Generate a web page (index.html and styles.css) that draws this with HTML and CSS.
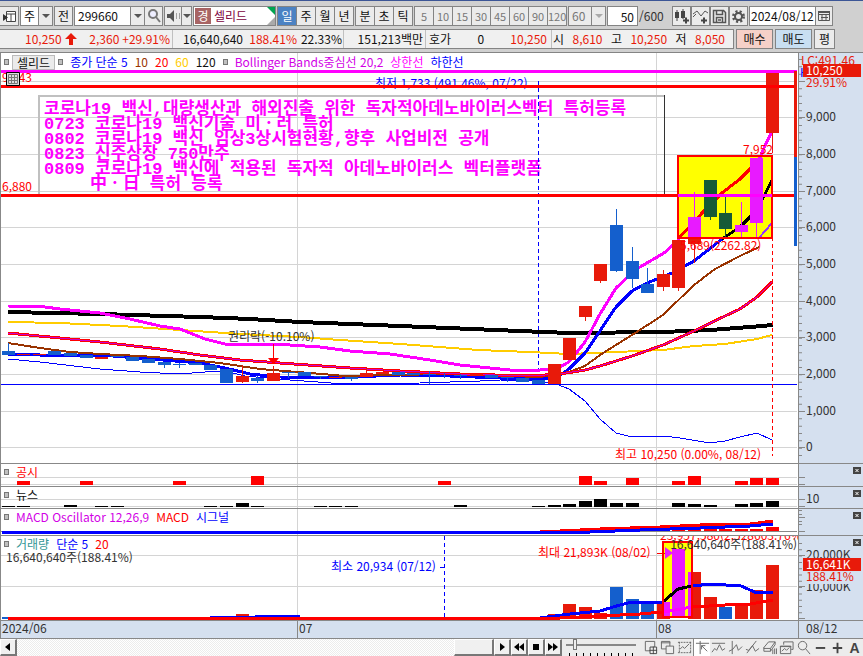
FILE: index.html
```html
<!DOCTYPE html>
<html lang="ko">
<head>
<meta charset="utf-8">
<title>셀리드 차트</title>
<link rel="stylesheet" href="styles.css">
</head>
<body>
<div class="app">
<header class="tools">
  <button class="btn icon" aria-label="목록"><svg width="15" height="15"><path d="M4.500 2.500h9v10h-9zM4 5h10M9 5v8" fill="#fff" stroke="#444"/><path d="M1 5l5 3.500-5 3.500z" fill="#333"/></svg></button>
  <label class="combo kind"><select aria-label="종류"><option>주</option></select><span class="arrow"></span></label>
  <button class="btn">전</button>
  <div class="combo code"><input aria-label="종목코드" value="299660"><button class="arrow" aria-label="최근 종목"></button><button class="find" aria-label="찾기"><svg width="16" height="16"><circle cx="7" cy="6" r="4" fill="#eef" stroke="#777" stroke-width="2"/><path d="M10 9l4 5" stroke="#777" stroke-width="2"/></svg></button></div>
  <div class="combo sound"><button aria-label="소리"><svg width="15" height="14"><path d="M1 5h3l4-4v12l-4-4h-3z" fill="#555"/><path d="M10 5h1M13 5h1M10 7h1M13 7h1M10 9h1M13 9h1" stroke="#555"/></svg></button><button class="arrow" aria-label="소리 메뉴"></button></div>
  <div class="stock"><b>경</b><span>셀리드</span><i></i></div>
  <div class="group"><button class="on">일</button><button>주</button><button>월</button><button>년</button></div>
  <div class="group"><button>분</button><button>초</button><button>틱</button></div>
  <div class="group dim"><button>5</button><button>10</button><button>15</button><button>30</button><button>45</button><button>60</button><button>90</button><button>120</button></div>
  <label class="combo mins"><select aria-label="분" disabled><option>60</option></select><span class="arrow"></span></label>
  <label class="count"><input aria-label="봉 개수" value="50"><span>/600</span></label>
  <div class="icons">
    <button class="btn" aria-label="지표 추가"><svg width="17" height="17"><path d="M2 4h4v6h-4zM8 3h4v7h-4z" fill="#444"/><path d="M4 2v11M10 1v10" stroke="#444"/><path d="M10 12.500h6M13 9.500v6" stroke="#444" stroke-width="2"/></svg></button>
    <button class="btn" aria-label="선 추가"><svg width="17" height="17"><path d="M1 6l4-3 4 5 4-5 3 2M1 9l3-3" fill="none" stroke="#555"/><path d="M9 12.500h6M12 9.500v6" stroke="#444" stroke-width="2"/></svg></button>
    <button class="btn" aria-label="저장"><svg width="17" height="17"><path d="M2.500 2.500h10l2 2v10h-12zM5.500 2.500v4h6v-4M5.500 14.500v-5h6v5M7 12h3" fill="none" stroke="#555" stroke-width="1.500"/></svg></button>
    <button class="btn" aria-label="설정"><svg width="17" height="17"><circle cx="8.500" cy="8.500" r="5" fill="none" stroke="#555" stroke-width="3" stroke-dasharray="2 2"/><circle cx="8.500" cy="8.500" r="3.500" fill="none" stroke="#555" stroke-width="2"/></svg></button>
  </div>
  <div class="combo date"><input aria-label="날짜" value="2024/08/12"><button aria-label="달력"><svg width="14" height="14"><path d="M1.500 2.500h11v9h-11zM1 5.500h12M4 8.500h7M5 5v6M9 5v6" fill="none" stroke="#555"/><path d="M1 3h12" stroke="#555" stroke-width="2"/></svg></button></div>
</header>
<section class="quote">
  <div class="strip">
    <div class="cell c1 up"><span>10,250</span><svg width="12" height="12"><path d="M6 0l6 6h-4v6h-4v-6h-4z" fill="#e81a0a"/></svg><span class="push">2,360</span><span>+29.91%</span></div>
    <div class="cell c2"><span>16,640,640</span><span class="up push">188.41%</span><span>22.33%</span></div>
    <div class="cell c3"><span>151,213백만</span></div>
    <div class="cell c4"><span>호가</span><span>0</span><span class="up">10,250</span></div>
    <div class="cell c5"><span>시</span><span class="up">8,610</span><span>고</span><span class="up">10,250</span><span>저</span><span class="up">8,050</span></div>
  </div>
  <button class="trade buy">매수</button><button class="trade sell">매도</button><button class="trade avg">평</button>
</section>
<main class="chart">
  <section class="panel">
    <div class="legend"><i></i><button>셀리드</button><i></i><span class="blue">종가 단순 5</span><span class="brown">10</span><span class="red">20</span><span class="gold">60</span><span>120</span><i></i><span class="violet">Bollinger Bands중심선 20,2</span><span class="pink">상한선</span><span class="blue">하한선</span></div>
    <svg class="plot" viewBox="0 53 798 410">
      <path class="grid" d="M1 81.500h796M1 117.500h796M1 154.500h796M1 191.500h796M1 227.500h796M1 264.500h796M1 301.500h796M1 337.500h796M1 374.500h796M1 411.500h796M1 447.500h796M297.500 53v410M656.500 53v410"/>
      <text class="red" x="2" y="82">9,843</text><text class="red" x="2" y="191">6,880</text>
      <text class="blue" x="375" y="88">최저 1,733 (491.46%, 07/22)</text>
      <path d="M38 96h626M39 96v98" stroke="#c0c0c0" stroke-width="2"/><path d="M664.500 95v100" stroke="#333"/>
      <g class="memo"><text x="44" y="114">코로나19 백신,대량생산과 해외진출 위한 독자적아데노바이러스벡터 특허등록</text><text x="44" y="129">0723 코로나19 백신기술 미ㆍ러 특허</text><text x="44" y="144">0802 코로나19 백신 임상3상시험현황,향후 사업비전 공개</text><text x="44" y="159">0823 신주상장 750만주</text><text x="44" y="174">0809 코로나19 백신에 적용된 독자적 아데노바이러스 벡터플랫폼</text><text x="90" y="189">中ㆍ日 특허 등록</text></g>
      <path d="M538.500 81v291" stroke="#00f" stroke-dasharray="4 3"/>
      <path d="M1 384.500h796" stroke="#00f"/>
      <g class="line">
        <polyline points="8,312 100,314 200,317 250,319 300,322 400,326 520,331 569,333 663,332 710,330 750,327 773,325" stroke="#000" stroke-width="4"/>
        <polyline points="8,322 60,323 120,326 180,330 240,334 300,337 340,340 400,344 478,350 530,352 569,354 616,352 663,350 694,346 725,344 757,339 772,335" stroke="#fc0" stroke-width="2"/>
        <polyline points="8,306 45,307 60,309 100,313 130,319 160,326 180,329 205,339 225,344 275,344 320,347 350,351 390,354 430,360 460,365 500,369 520,371 540,370 556,369 569,362 585,342 600,314 616,288 632,273 640,267 664,253 672,246 680,239" stroke="#f0f" stroke-width="3"/>
        <polyline points="8,354 40,355 100,355 150,359 200,363 225,368 250,374 280,377 330,378 400,375 450,376 500,378 554,379 569,369 585,353 600,331 616,307 632,291 647,283 657,279 672,273 694,261 722,239" stroke="#00f" stroke-width="3"/>
        <polyline points="8,343 40,348 70,352 100,354 140,356 180,359 220,363 260,369 310,373 345,376 390,375 450,374 540,377 569,372 585,366 600,355 632,335 663,315 694,285 715,269 740,256 759,247" stroke="#930" stroke-width="2"/>
        <polyline points="8,333 60,338 100,342 160,349 200,355 240,360 280,363 350,368 400,371 460,374 530,376 560,374 585,370 600,366 632,356 663,345 694,331 725,316 740,309 757,297 772,282" stroke="#f00" stroke-width="3"/>
        <polyline points="8,333 60,338 100,342 160,349 200,355 240,360 280,363 350,368 400,371 460,374 530,376 560,374 585,370 600,366 632,356 663,345 694,331 725,316 740,309 757,297 772,282" stroke="#c0c" stroke-width="1"/>
        <polyline points="8,359 40,362 100,369 140,372 180,374 205,372 225,371 245,376 290,380 345,384 420,383 480,381 500,380 540,381 556,384 569,389 585,401 600,419 616,433 632,437 663,436 680,438 710,443 725,441 740,437 757,433 772,440" stroke="#00f" stroke-width="1"/>
      </g>
      <path class="down" d="M2 351h13v4h-13zM8 343h1v10h-1zM48 351h13v4h-13zM64 353h13v3h-13zM80 355h13v3h-13zM111 356h13v1h-13zM126 357h13v4h-13zM142 359h13v4h-13zM158 362h13v3h-13zM164 362h1v6h-1zM173 364h13v1h-13zM179 363h1v5h-1zM189 363h13v2h-13zM204 365h13v5h-13zM220 369h13v14h-13zM251 378h13v3h-13zM257 376h1v7h-1zM282 372h13v1h-13zM288 372h1v6h-1zM298 372h13v4h-13zM314 376h13v1h-13zM320 376h1v3h-1zM345 377h13v2h-13zM351 377h1v4h-1zM392 372h13v3h-13zM407 373h13v2h-13zM429 371h1v13h-1zM423 374h13v1h-13zM444 373h1v5h-1zM454 375h13v1h-13zM460 374h1v5h-1zM485 375h13v3h-13zM501 377h13v1h-13zM507 377h1v5h-1zM516 378h13v4h-13zM532 380h13v4h-13zM610 225h13v46h-13zM616 209h1v63h-1zM626 261h13v18h-13zM632 247h1v41h-1zM641 284h13v9h-13zM647 268h1v25h-1z"/>
      <path class="upfill" d="M17 354h13v1h-13zM33 354h13v1h-13zM95 357h13v2h-13zM236 376h13v6h-13zM242 365h1v18h-1zM267 373h13v8h-13zM273 366h1v8h-1zM329 377h13v1h-13zM360 373h13v4h-13zM366 368h1v6h-1zM376 372h13v2h-13zM470 374h13v2h-13zM548 364h13v20h-13zM563 338h13v22h-13zM579 306h13v11h-13zM585 306h1v15h-1zM594 264h13v17h-13zM600 264h1v19h-1zM657 274h13v13h-13zM663 270h1v21h-1zM672 240h13v48h-13zM678 240h1v51h-1zM688 217h13v27h-13zM694 217h1v46h-1zM766 72h13v61h-13zM772 72h1v81h-1z"/>
      <path d="M678 156h94v82h-94z" fill="#ff0"/>
      <g class="line"><polyline points="680,237 703,212 722,193 740,179 752,167" stroke="#f00" stroke-width="3"/><polyline points="722,239 740,227 750,217 763,198 772,180" stroke="#000" stroke-width="3"/><polyline points="759,238 772,223" stroke="#93f" stroke-width="2"/><polyline points="756,167 763,150 772,131" stroke="#f0f" stroke-width="3"/></g>
      <path fill="#e81aff" d="M688 217h13v21h-13zM694 192h1v27h-1zM735 225h13v7h-13zM741 202h1v36h-1zM750 158h13v65h-13zM756 158h1v80h-1z"/>
      <path fill="#165a37" d="M704 180h13v37h-13zM710 180h1v40h-1zM719 213h13v16h-13zM725 196h1v41h-1z"/>
      <path class="upfill" d="M766 72h13v61h-13z"/>
      <path d="M678 156h94v82h-94z" fill="none" stroke="#f00" stroke-width="2"/>
      <path d="M1 86.500h796M1 195.500h796" stroke="#f00" stroke-width="3"/><path d="M1 71.500h796M678 195.500h94" stroke="#f0f" stroke-width="3"/>
      <path d="M772.500 160v296" stroke="#f00" stroke-dasharray="4 3"/>
      <path d="M795.500 71v86" stroke="#e81a0a" stroke-width="3"/><path d="M795.500 157v89" stroke="#145fcd" stroke-width="3"/>
      <text x="228" y="341">권리락(-10.10%)</text><path d="M273 344h1v14h5l-5 6h-1l-5-6h5z" fill="#f00"/>
      <text class="red" x="743" y="154">7,952</text><text class="red" x="680" y="250">5,689(2262.82)</text><text class="red" x="615" y="459">최고 10,250 (0.00%, 08/12)</text>
      <path d="M6.500 72.500h13v13h-13z" fill="#ddd" stroke="#000"/><path d="M8.500 74.500h9v9h-9zM8 77.500h10M8 80.500h10M11.500 74v10M14.500 74v10" fill="none" stroke="#777"/>
    </svg>
    <svg class="axis" viewBox="798 53 65 410">
      <path class="tick" d="M798.500 53v410M799 81.500h6M799 117.500h6M799 154.500h6M799 191.500h6M799 227.500h6M799 264.500h6M799 301.500h6M799 337.500h6M799 374.500h6M799 411.500h6M799 447.500h6"/>
      <path d="M800.500 59v400" stroke="#888" stroke-width="3" stroke-dasharray="1 6.333"/>
      <text class="upfill" x="801" y="65">LC:491.46</text><text class="blue" x="800" y="77">H</text><path class="upfill" d="M803 64h58v13h-58z"/><text class="white" x="806" y="75">10,250</text><text class="upfill" x="806" y="87">29.91%</text>
      <text x="806" y="121">9,000</text><text x="806" y="158">8,000</text><text x="806" y="195">7,000</text><text x="806" y="231">6,000</text><text x="806" y="268">5,000</text><text x="806" y="305">4,000</text><text x="806" y="341">3,000</text><text x="806" y="378">2,000</text><text x="806" y="415">1,000</text><text x="806" y="451">0</text>
    </svg>
  </section>
  <section class="panel">
    <div class="legend"><i></i><span class="red">공시</span></div>
    <svg class="plot" viewBox="0 463 798 23"><path class="grid" d="M1 477.500h796M1 484.500h796M297.500 463v23M656.500 463v23"/><path class="tick" d="M0 463.500h798"/><path fill="#f00" d="M17 481h13v4h-13zM80 481h13v4h-13zM173 481h13v4h-13zM251 476h13v9h-13zM438 481h13v4h-13zM579 476h13v9h-13zM594 481h13v4h-13zM626 478h13v7h-13zM672 481h13v4h-13zM688 476h13v9h-13zM735 481h13v4h-13zM750 478h13v7h-13zM766 478h13v7h-13z"/></svg>
    <svg class="axis" viewBox="798 463 65 23"><path class="tick" d="M798.500 463v23M798 463.500h65M799 477.500h6M799 484.500h6"/><path class="close" d="M853 467h8v7h-8z"/><path class="cross" d="M855.500 469l3 3M858.500 469l-3 3"/></svg>
  </section>
  <section class="panel">
    <div class="legend"><i></i><span>뉴스</span></div>
    <svg class="plot" viewBox="0 486 798 22"><path class="grid" d="M1 499.500h796M1 506.500h796M297.500 486v22M656.500 486v22"/><path class="tick" d="M0 486.500h798"/><path d="M2 506h13v1h-13zM17 506h13v1h-13zM64 505h13v2h-13zM95 506h13v1h-13zM111 506h13v1h-13zM204 506h13v1h-13zM220 506h13v1h-13zM236 503h13v4h-13zM251 506h13v1h-13zM314 506h13v1h-13zM329 506h13v1h-13zM345 506h13v1h-13zM454 505h13v2h-13zM532 506h13v1h-13zM548 505h13v2h-13zM563 504h13v3h-13zM579 501h13v6h-13zM594 499h13v8h-13zM610 503h13v4h-13zM626 503h13v4h-13zM672 503h13v4h-13zM688 504h13v3h-13zM704 505h13v2h-13zM735 504h13v3h-13zM750 503h13v4h-13zM766 501h13v6h-13z"/></svg>
    <svg class="axis" viewBox="798 486 65 22"><path class="tick" d="M798.500 486v22M798 486.500h65M799 499.500h6M799 506.500h6"/><text x="806" y="503">10</text><path class="close" d="M853 490h8v7h-8z"/><path class="cross" d="M855.500 492l3 3M858.500 492l-3 3"/></svg>
  </section>
  <section class="panel">
    <div class="legend"><i></i><span class="violet">MACD Oscillator 12,26,9</span><span class="red">MACD</span><span class="blue">시그널</span></div>
    <svg class="plot" viewBox="0 508 798 27"><path class="grid" d="M297.500 508v27M656.500 508v27"/><path class="tick" d="M0 508.500h798M1 531.500h796"/><path fill="#f00" d="M563 530h13v1h-13zM579 530h13v1h-13zM594 530h13v1h-13zM641 529h13v2h-13zM657 529h13v2h-13zM672 529h13v2h-13zM688 529h13v2h-13zM704 529h13v2h-13zM719 529h13v2h-13zM735 529h13v2h-13zM750 529h13v2h-13zM766 527h13v4h-13z"/><g class="line"><polyline points="8,532 540,532 600,529 660,527 700,525 750,524 773,521" stroke="#f00" stroke-width="3"/><polyline points="2,532 590,532 640,530 700,528 750,526 773,524" stroke="#00f" stroke-width="3"/></g></svg>
    <svg class="axis" viewBox="798 508 65 27"><path class="tick" d="M798.500 508v27M798 508.500h65M799 517.500h6M799 531.500h6M799 510.500h3M799 514.500h3M799 521.500h3M799 524.500h3"/><path class="close" d="M853 512h8v7h-8z"/><path class="cross" d="M855.500 514l3 3M858.500 514l-3 3"/></svg>
  </section>
  <section class="panel">
    <div class="legend"><i></i><span class="teal">거래량</span><span class="blue">단순 5</span><span class="red">20</span></div>
    <svg class="plot" viewBox="0 535 798 85">
      <path class="grid" d="M1 555.500h796M1 586.500h796M297.500 535v85M656.500 535v85"/>
      <text class="red" x="660" y="540">23,957,580(2,528603.76%)</text>
      <path class="upfill" d="M236 614h13v4h-13zM548 614h13v5h-13zM563 604h13v15h-13zM579 607h13v12h-13zM594 613h13v6h-13zM657 602h13v17h-13zM688 572h13v47h-13zM704 597h13v22h-13zM735 605h13v14h-13zM750 590h13v29h-13zM766 565h13v54h-13z"/>
      <path class="down" d="M2 617h13v2h-13zM610 587h13v32h-13zM626 599h13v20h-13zM641 604h13v15h-13zM719 607h13v12h-13z"/>
      <path d="M663 542h29v75h-29z" fill="#ff0"/><path fill="#e81aff" d="M664 602h6v15h-6zM672 549h13v68h-13zM688 572h4v45h-4z"/>
      <g class="line"><polyline points="210,617 300,616" stroke="#00f" stroke-width="2"/><polyline points="540,618 570,614 600,611 620,605 632,602 663,602" stroke="#00f" stroke-width="3"/><polyline points="664,601 678,589 692,586" stroke="#000" stroke-width="3"/><polyline points="693,586 710,584 741,586 757,593 773,592" stroke="#00f" stroke-width="3"/><polyline points="8,618 560,618 640,614 663,612" stroke="#f00" stroke-width="3"/><polyline points="664,612 692,607" stroke="#f0f" stroke-width="3"/><polyline points="693,607 725,605 750,604 773,600" stroke="#f00" stroke-width="3"/></g>
      <path d="M663 542h29v75h-29z" fill="none" stroke="#f00" stroke-width="2"/>
      <path d="M444.500 536v82M440 567.500h4" stroke="#00f" stroke-dasharray="4 3"/><path d="M657 553.500h8" stroke="#f00"/><path d="M665 547l8 6-8 6z" fill="#e81aff"/>
      <text x="6" y="562">16,640,640주(188.41%)</text><text x="797" y="549" text-anchor="end">16,640,640주(188.41%)</text><text class="blue" x="331" y="571">최소 20,934 (07/12)</text><text class="red" x="538" y="557">최대 21,893K (08/02)</text>
      <path class="tick" d="M0 535.500h798"/>
    </svg>
    <svg class="axis" viewBox="798 535 65 85"><text x="806" y="591">10,000K</text><path d="M806 576h56v8h-56z" fill="#d5e0ef"/><path class="tick" d="M798.500 535v85M798 535.500h65M799 555.500h6M799 586.500h6M799 618.500h6"/><path d="M800.500 543v76" stroke="#888" stroke-width="3" stroke-dasharray="1 5.300"/><text x="806" y="559">20,000K</text><path class="upfill" d="M803 558h58v13h-58z"/><text class="white" x="806" y="569">16,641K</text><text class="upfill" x="806" y="581">188.41%</text><path class="close" d="M853 539h8v7h-8z"/><path class="cross" d="M855.500 541l3 3M858.500 541l-3 3"/></svg>
  </section>
  <section class="panel dates">
    <svg class="plot" viewBox="0 620 798 18"><path class="tick" d="M0 620.500h798M297.500 620v18M656.500 620v18"/><text x="2" y="633">2024/06</text><text x="299" y="633">07</text><text x="658" y="633">08</text></svg>
    <svg class="axis" viewBox="798 620 65 18"><path class="tick" d="M798 620.500h65M798.500 620v18"/><text x="806" y="633">08/12</text></svg>
  </section>
</main>
<footer class="bottom">
  <button class="nav" aria-label="왼쪽"><svg width="10" height="10"><path d="M7 1v8l-5-4z"/></svg></button>
  <div class="track"><div class="thumb"></div></div>
  <button class="nav" aria-label="오른쪽"><svg width="10" height="10"><path d="M3 1v8l5-4z"/></svg></button>
  <button class="nav" aria-label="뒤로"><svg width="10" height="10"><path d="M5 1v8l-5-4zM10 1v8l-5-4z"/></svg></button>
  <button class="nav" aria-label="정지"><svg width="10" height="10"><path d="M2 2h6v6h-6z"/></svg></button>
  <button class="nav" aria-label="앞으로"><svg width="10" height="10"><path d="M0 1v8l5-4zM5 1v8l5-4z"/></svg></button>
  <div class="speed"><input type="range" aria-label="속도" min="0" max="10" value="1"></div>
  <div class="draw">
    <button aria-label="새 창"><svg viewBox="0 0 16 16"><path d="M2.500 1.500h10v10h-10z"/><path d="M7.500 7.500h7v7h-7zM11 7v8M7 11h8" fill="#eee" stroke="#444"/></svg></button>
    <button aria-label="겹치기"><svg viewBox="0 0 16 16"><path d="M1.500 1.500h9v8h-9zM1 3h10"/><path d="M6.500 6.500h8v8h-8z" fill="#eee"/></svg></button>
    <button aria-label="영역"><svg viewBox="0 0 16 16"><path d="M1 2.500h14M1 13.500h14M2.500 2v12M14.500 2v12" stroke-dasharray="2 1"/><path d="M3 10l3-3 2 2 5-5"/></svg></button>
    <button class="on" aria-label="십자선"><svg viewBox="0 0 16 16"><path d="M1 3.500h14M5.500 1v14M7 6l6 6M7 10v-4h4"/></svg></button>
    <button aria-label="추세선"><svg viewBox="0 0 16 16"><path d="M1 3.500h14M1 13l3-4 2 2 3-6 3 6 3-2"/></svg></button>
    <button aria-label="수직선"><svg viewBox="0 0 16 16"><path d="M4.500 1v14M1 12l4-2 4-5 2 6 4-4"/></svg></button>
    <button aria-label="각도선"><svg viewBox="0 0 16 16"><path d="M2 14l10-13M1 10l3 1 4-5 3 6 4-3"/></svg></button>
    <button aria-label="지우개"><svg viewBox="0 0 16 16"><path d="M2 8l5-6h7l-5 7h-7zM2 8v4h7v-3M9 12l5-7v-3M11.500 10v5M13.500 9v6M15.500 9v6"/></svg></button>
    <button aria-label="그림"><svg viewBox="0 0 16 16"><path d="M5 5v-3h10v8h-2M1.500 6.500h11v8h-11zM1 7h12M3 12l3-3 2 2 3-3"/></svg></button>
    <button aria-label="확대경"><svg viewBox="0 0 16 16"><circle cx="7" cy="6" r="4.500"/><path d="M10 9l5 6"/></svg></button>
    <button aria-label="축소"><svg viewBox="0 0 16 16"><path d="M3 8.500h10" stroke="#444" stroke-width="2"/></svg></button>
    <button aria-label="확대"><svg viewBox="0 0 16 16"><path d="M3 8.500h10M8 3v11" stroke="#444" stroke-width="2"/></svg></button>
    <button class="auto">A</button>
  </div>
</footer>
</div>
</body>
</html>
```
FILE: styles.css
```css
* { box-sizing: border-box; }
body { margin: 0; background: #d0d0d0; color: #111; font: 12px/16px "Noto Sans CJK KR", sans-serif; }
button, input, select { font: inherit; color: inherit; border: 0; margin: 0; padding: 0; background: none; border-radius: 0; }
input, select { min-width: 0; outline: 0; appearance: none; }
svg { display: block; flex: none; }
.app { border-top: 1px solid #3c5696; overflow: hidden; }

.tools { display: flex; height: 28px; padding-top: 5px; gap: 1px; }
.tools > * { height: 20px; flex: none; }
.btn { border: 1px solid #848484; background: #ebebeb; min-width: 19px; display: flex; align-items: center; justify-content: center; }
.icon { border-left: 0; width: 19px; }
.combo { display: flex; border: 1px solid #848484; background: #fff; }
.combo > * + * { border-left: 1px solid #848484; }
.combo button, .arrow { background: #ebebeb; display: flex; align-items: center; justify-content: center; }
.combo input, .combo select { flex: 1; padding-left: 3px; }
.combo .arrow { width: 14px; flex: none; }
.arrow::after { content: ""; border: 4px solid transparent; border-top-color: #555; border-bottom: 0; }
.kind { width: 33px; }
.code { width: 89px; }
.find { width: 18px; }
.sound { width: 28px; }
.sound > :first-child { flex: 1; overflow: hidden; }
.sound .arrow { width: 10px; }
.stock { display: flex; align-items: center; width: 83px; gap: 3px; padding-left: 1px; border: 1px solid #848484; background: #fff; color: #80003c; position: relative; }
.stock b { background: #a86464; color: #fff; font-weight: 400; width: 16px; height: 16px; text-align: center; }
.stock i { position: absolute; right: 0; top: 0; border: 4px solid; border-color: #00a550 #00a550 transparent transparent; }
.stock i::after { content: ""; position: absolute; right: -4px; top: 6px; border: 4px solid; border-color: transparent #aaa #aaa transparent; }
.group { display: flex; border: 1px solid #848484; border-left: 0; background: #ebebeb; }
.group button { width: 19px; border-left: 1px solid #848484; }
.group .on { background: #4b82c3; color: #fff; }
.dim, .mins { color: #777; }
.dim { font-size: 11px; }
.mins, .mins select { background: #ebebeb; opacity: 1; }
.mins { width: 38px; }
.mins .arrow::after { border-top-color: #aaa; }
.count { display: flex; width: 64px; align-items: center; gap: 1px; color: #333; }
.count input { width: 31px; height: 20px; border: 1px solid #848484; background: #fff; text-align: right; padding-right: 3px; color: #111; }
.icons { display: flex; }
.date { width: 84px; }
.date input { padding-left: 1px; }
.date button { width: 17px; }

.quote { display: flex; height: 23px; gap: 2px; }
.strip { flex: 0 0 734px; display: flex; height: 20px; border: 1px solid #848484; border-left: 0; background: #f0f0f0; }
.cell { display: flex; align-items: center; gap: 4px; padding: 0 3px 0 10px; }
.cell + .cell { border-left: 1px solid #c0c0c0; }
.cell span { white-space: nowrap; }
.up { color: #e81a0a; }
.push { margin-left: auto; }
.c1 { width: 172px; padding: 0 2px 0 25px; gap: 3px; }
.c2 { width: 171px; padding-right: 1px; }
.c3 { width: 82px; justify-content: flex-end; padding: 0 2px; }
.c4 { width: 126px; justify-content: space-between; padding: 0 4px 0 3px; }
.c5 { flex: 1; justify-content: space-between; padding: 0 8px 0 1px; gap: 0; }
.trade { width: 37px; height: 20px; border: 1px solid #848484; }
.buy { background: #f5d0c8; }
.sell { background: #c8dff2; }
.avg { width: 21px; background: #ebebeb; }

.chart { background: #fff; border-top: 1px solid #848484; }
.panel { display: grid; grid-template-columns: 798fr 65fr; position: relative; }
.plot, .axis { width: 100%; height: auto; min-width: 0; }
.plot { background: linear-gradient(#888, #888) 0 0 / 1px 100% no-repeat; }
.axis, .dates { background: #d5e0ef; }
.legend { position: absolute; left: 4px; top: 1px; display: flex; align-items: center; gap: 7px; white-space: nowrap; }
.legend i { width: 5px; height: 6px; border: 1px solid #777; background: #c0c0c0; flex: none; }
.legend button { border: 1px solid #bbb; background: #ebebeb; padding: 0 4px; height: 15px; line-height: 13px; margin: 0 -4px; }
text { fill: #333; white-space: pre; }
.memo text { font: 700 17px "Liberation Mono", "Noto Sans CJK KR", monospace; fill: #f0f; }
.grid { stroke: #d4d4d4; fill: none; }
.tick { stroke: #888; fill: none; }
.line polyline { fill: none; shape-rendering: crispEdges; }
.down { fill: #145fcd; }
.upfill { fill: #e81a0a; }
.close { fill: #444; }
.cross { stroke: #fff; }
.white { fill: #fff; }
.red { color: #f00; fill: #f00; }
.blue { color: #00f; fill: #00f; }
.brown { color: #930; }
.gold { color: #fc0; }
.violet { color: #d200e6; }
.pink { color: #f0f; }
.teal { color: #329696; }

.bottom { display: flex; height: 18px; background: #ececec; border-top: 1px solid #888; }
.nav, .thumb { width: 17px; background: #f0f0f0; border: 1px solid #fff; border-right: 2px solid #777; border-bottom: 2px solid #777; flex: none; }
.nav { display: flex; align-items: center; justify-content: center; }
.track { flex: 1; display: flex; justify-content: flex-end; background: repeating-conic-gradient(#fff 0 25%, #ececec 0 50%) 0 0 / 2px 2px; }
.thumb { width: 40px; }
.speed { width: 80px; padding: 0 4px; flex: none; background: repeating-linear-gradient(90deg, #000 0 1px, transparent 1px 7px) 7px 100% / 66px 3px no-repeat; }
.speed input { width: 70px; height: 12px; display: block; }
.speed input::-webkit-slider-runnable-track { height: 2px; background: #888; }
.speed input::-webkit-slider-thumb { appearance: none; width: 4px; height: 11px; margin-top: -5px; background: #eee; border: 1px solid #777; }
.draw { display: flex; width: 221px; flex: none; }
.draw button { width: 17px; flex: none; display: flex; align-items: center; justify-content: center; }
.draw svg { width: 15px; height: 15px; fill: none; stroke: #666; }
.draw .on { background: #fff; border-left: 1px solid #888; }
.draw .auto { font: 700 14px "Liberation Sans", sans-serif; color: #444; }
```
